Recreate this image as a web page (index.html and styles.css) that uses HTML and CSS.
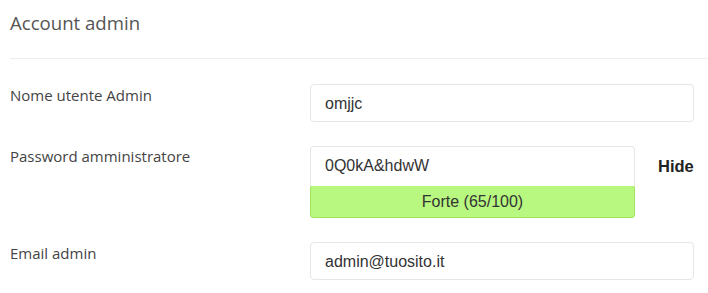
FILE: index.html
```html
<!DOCTYPE html>
<html>
<head>
<meta charset="utf-8">
<link rel="stylesheet" href="styles.css">
</head>
<body>
<div class="panel">
  <h2 class="title">Account admin</h2>
  <div class="rule"></div>
  <div class="row row-user">
    <label class="label">Nome utente Admin</label>
    <div class="field">
      <div class="input">omjjc</div>
    </div>
  </div>
  <div class="row row-pass">
    <label class="label">Password amministratore</label>
    <div class="field pass-field">
      <div class="pass-line">
        <div class="input pass-input">0Q0kA&amp;hdwW</div>
        <span class="hide">Hide</span>
      </div>
      <div class="strength">Forte (65/100)</div>
    </div>
  </div>
  <div class="row row-email">
    <label class="label">Email admin</label>
    <div class="field">
      <div class="input">admin@tuosito.it</div>
    </div>
  </div>
</div>
</body>
</html>
```

FILE: styles.css
```css
html, body {
  margin: 0;
  padding: 0;
  background: #fff;
}
.panel {
  padding: 0 14px 0 10px;
  font-family: "Open Sans", sans-serif;
}
.title {
  margin: 0;
  padding-top: 10px;
  height: 36px;
  font-size: 18.6px;
  font-weight: 400;
  line-height: 25px;
  color: #555;
}
.rule {
  height: 1px;
  background: #eee;
  margin-top: 12px;
  margin-right: -14px;
}
.row {
  display: flex;
  align-items: flex-start;
}
.row-user { margin-top: 25px; }
.row-pass { margin-top: 24px; }
.row-email { margin-top: 24px; }
.label {
  width: 300px;
  flex: none;
  font-size: 15px;
  line-height: 20px;
  color: #444;
}
.row-user .label { padding-top: 1px; }
.row-pass .label { padding-top: 0px; }
.row-email .label { padding-top: 1px; }
.field {
  flex: 1;
}
.input {
  box-sizing: border-box;
  height: 38px;
  border: 1px solid #e6e6e6;
  border-radius: 4px;
  padding: 0 14px;
  font-family: "Liberation Sans", Arial, sans-serif;
  font-size: 16px;
  line-height: 37px;
  color: #333;
  background: #fff;
}
.pass-line {
  display: flex;
  align-items: center;
}
.pass-input {
  width: 325px;
  height: 40px;
  line-height: 38px;
  border-bottom: none;
  border-radius: 4px 4px 0 0;
}
.hide {
  margin-left: 23px;
  font-family: "Liberation Sans", Arial, sans-serif;
  font-weight: 700;
  font-size: 16.5px;
  color: #222;
}
.strength {
  box-sizing: border-box;
  width: 325px;
  height: 33px;
  margin-top: -1px;
  background: #b8f780;
  border: 1px solid #a0e45e;
  border-radius: 3px;
  text-align: center;
  font-family: "Liberation Sans", Arial, sans-serif;
  font-size: 16px;
  line-height: 31px;
  color: #333;
}
```
